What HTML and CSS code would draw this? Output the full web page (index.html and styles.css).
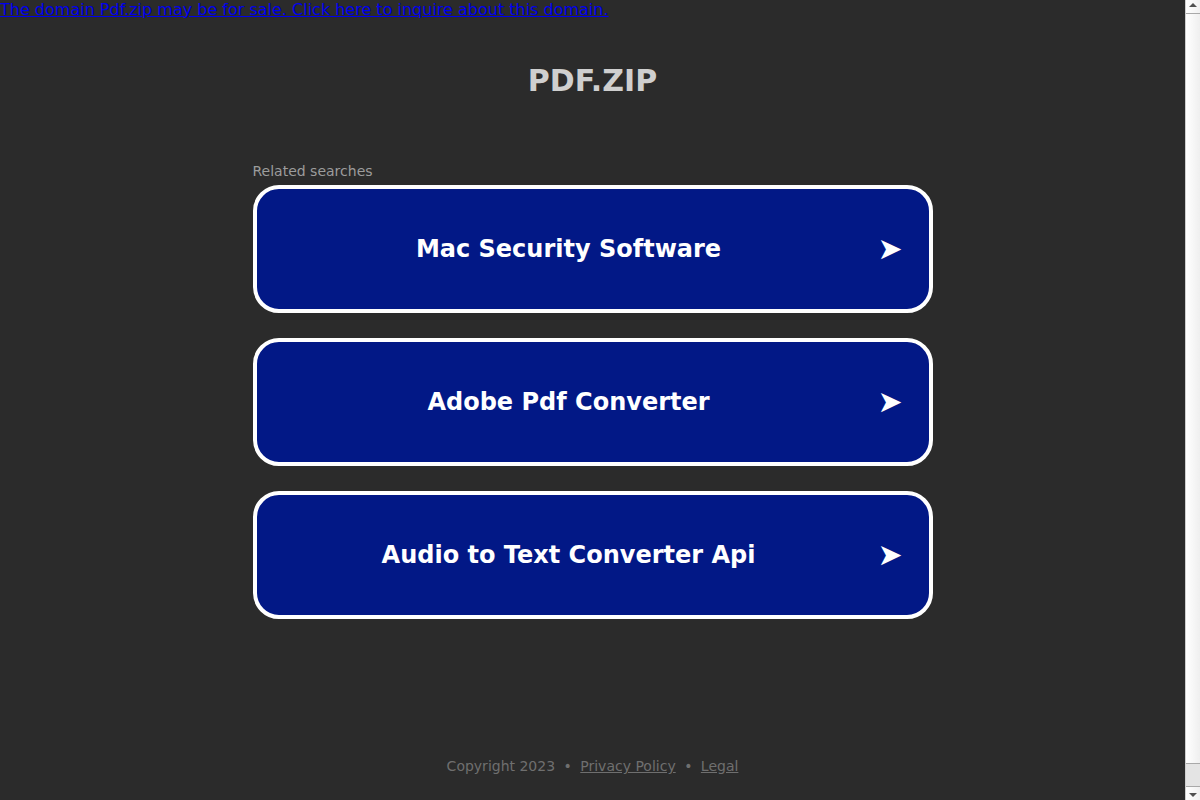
FILE: index.html
```html
<!DOCTYPE html>
<html lang="en">
<head>
<meta charset="utf-8">
<title>pdf.zip</title>
<link rel="stylesheet" href="styles.css">
</head>
<body>
<div class="viewport">
  <a class="sale" href="#">The domain Pdf.zip may be for sale. Click here to inquire about this domain.</a>
  <div class="page">
    <h1 class="title">PDF.ZIP</h1>
    <div class="related">
      <div class="related-label">Related searches</div>
      <a class="card" href="#"><span class="card-text">Mac Security Software</span><span class="card-arrow">➤</span></a>
      <a class="card" href="#"><span class="card-text">Adobe Pdf Converter</span><span class="card-arrow">➤</span></a>
      <a class="card" href="#"><span class="card-text">Audio to Text Converter Api</span><span class="card-arrow">➤</span></a>
    </div>
    <div class="footer">Copyright 2023 <span class="dot">•</span> <a href="#">Privacy Policy</a> <span class="dot">•</span> <a href="#">Legal</a></div>
  </div>
</div>
<div class="scrollbar">
  <div class="sb-btn"><span class="tri-up"></span></div>
  <div class="sb-thumb"></div>
  <div class="sb-track"></div>
  <div class="sb-btn sb-btn-down"><span class="tri-down"></span></div>
</div>
</body>
</html>
```

FILE: styles.css
```css
html, body {
  margin: 0;
  padding: 0;
  background: #2b2b2b;
  font-family: "DejaVu Sans", sans-serif;
}
.viewport {
  width: 1185px;
}
.sale {
  display: block;
  font-size: 16px;
  line-height: 19px;
  color: #0000ee;
  text-decoration: underline;
}
.page {
  display: flex;
  flex-direction: column;
  align-items: center;
}
.title {
  margin: 44px 0 0;
  font-size: 30px;
  line-height: 36px;
  font-weight: bold;
  color: #cfcfcf;
}
.related {
  width: 680px;
  margin-top: 64px;
  display: flex;
  flex-direction: column;
  gap: 25px;
}
.related-label {
  font-size: 14px;
  line-height: 16px;
  color: #9c9c9c;
  margin-bottom: -19px;
}
.card {
  box-sizing: border-box;
  height: 128px;
  border: 4px solid #ffffff;
  border-radius: 26px;
  background: #021886;
  display: flex;
  align-items: center;
  text-decoration: none;
  color: #ffffff;
}
.card-text {
  flex: 1;
  text-align: center;
  font-size: 24px;
  font-weight: bold;
}
.card-arrow {
  width: 48px;
  font-size: 30px;
  line-height: 30px;
  text-indent: -3px;
}
.footer {
  margin-top: 139px;
  padding-bottom: 30px;
  font-size: 14px;
  line-height: 16px;
  color: #6f6f6f;
}
.footer a {
  color: #6f6f6f;
}
.dot {
  margin: 0 4px;
}
.scrollbar {
  position: fixed;
  top: 0;
  right: 0;
  bottom: 0;
  width: 14px;
  border-left: 1px solid #cfcfcf;
  background: #e4e4e4;
  display: flex;
  flex-direction: column;
}
.sb-btn {
  height: 13px;
  background: linear-gradient(to right, #ffffff, #f0f0f0);
  border-bottom: 1px solid #a9a9a9;
  display: flex;
  justify-content: center;
  align-items: center;
}
.sb-btn-down {
  border-bottom: none;
  border-top: 1px solid #a9a9a9;
}
.tri-up {
  width: 0;
  height: 0;
  border-left: 4px solid transparent;
  border-right: 4px solid transparent;
  border-bottom: 4px solid #505050;
  margin-top: -4px;
}
.tri-down {
  width: 0;
  height: 0;
  border-left: 4px solid transparent;
  border-right: 4px solid transparent;
  border-top: 4px solid #505050;
  margin-top: 2px;
}
.sb-thumb {
  height: 749px;
  background: linear-gradient(to right, #ffffff, #efefef);
  border-bottom: 1px solid #a9a9a9;
}
.sb-track {
  flex: 1;
  background: #e4e4e4;
}
```
